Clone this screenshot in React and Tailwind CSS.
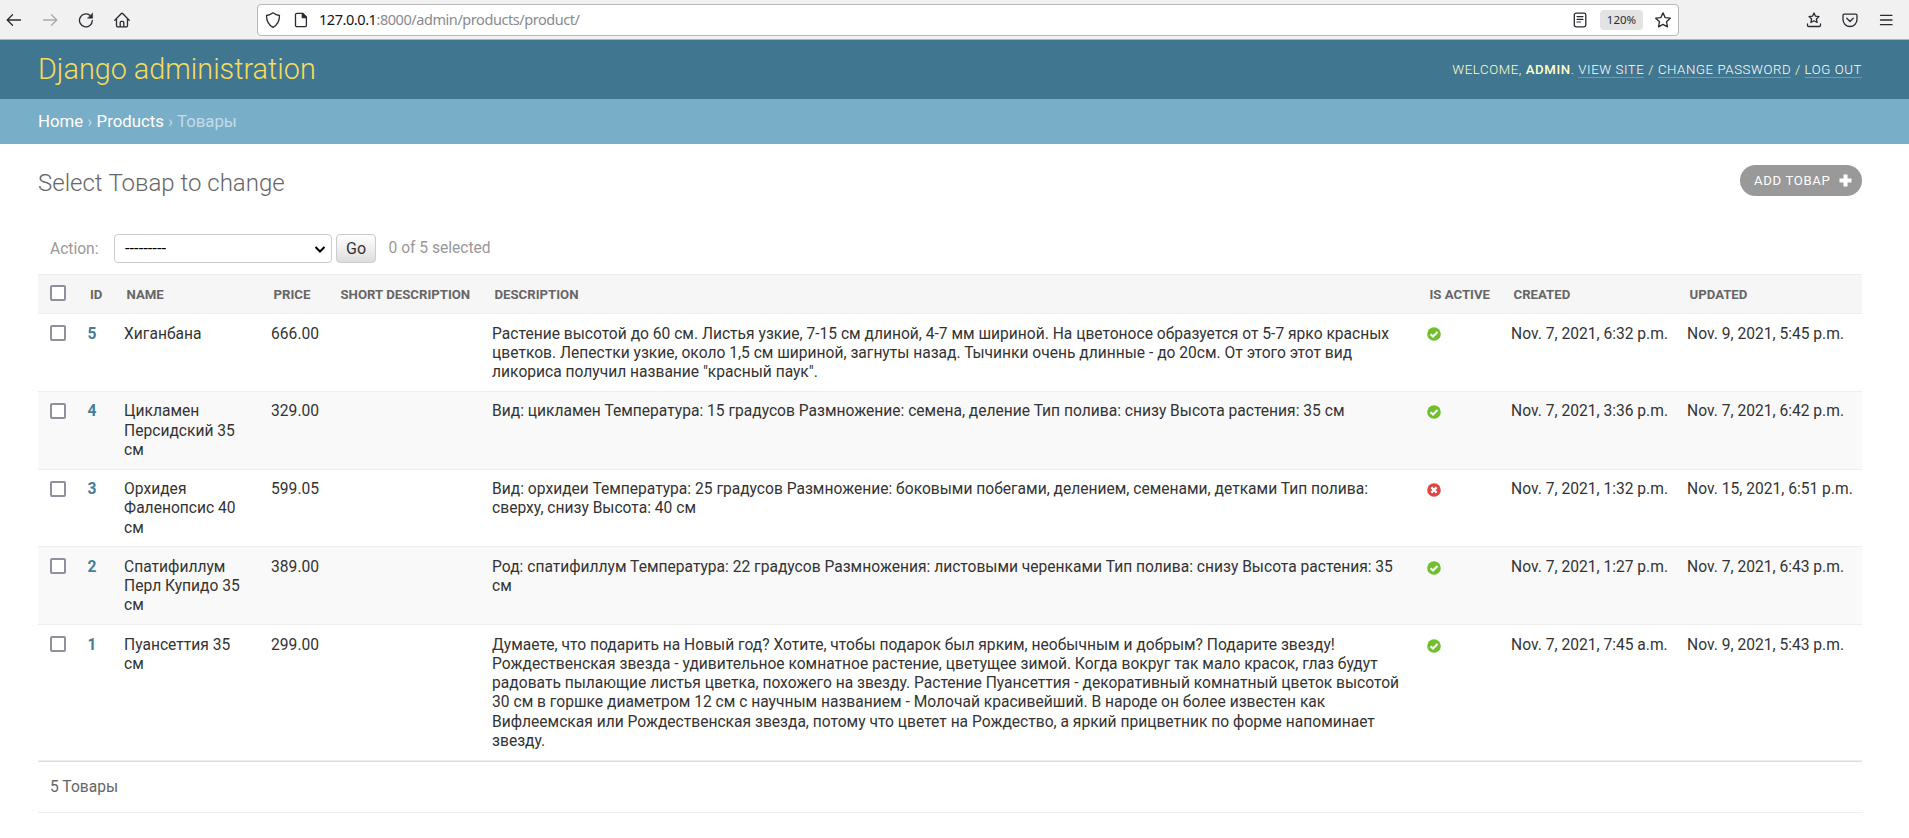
const ROWS = [
  { id: 5, name: 'Хиганбана', price: '666.00', desc: 'Растение высотой до 60 см. Листья узкие, 7-15 см длиной, 4-7 мм шириной. На цветоносе образуется от 5-7 ярко красных цветков. Лепестки узкие, около 1,5 см шириной, загнуты назад. Тычинки очень длинные - до 20см. От этого этот вид ликориса получил название "красный паук".', active: true, created: 'Nov. 7, 2021, 6:32 p.m.', updated: 'Nov. 9, 2021, 5:45 p.m.' },
  { id: 4, name: 'Цикламен Персидский 35 см', price: '329.00', desc: 'Вид: цикламен Температура: 15 градусов Размножение: семена, деление Тип полива: снизу Высота растения: 35 см', active: true, created: 'Nov. 7, 2021, 3:36 p.m.', updated: 'Nov. 7, 2021, 6:42 p.m.' },
  { id: 3, name: 'Орхидея Фаленопсис 40 см', price: '599.05', desc: 'Вид: орхидеи Температура: 25 градусов Размножение: боковыми побегами, делением, семенами, детками Тип полива: сверху, снизу Высота: 40 см', active: false, created: 'Nov. 7, 2021, 1:32 p.m.', updated: 'Nov. 15, 2021, 6:51 p.m.' },
  { id: 2, name: 'Спатифиллум Перл Купидо 35 см', price: '389.00', desc: 'Род: спатифиллум Температура: 22 градусов Размножения: листовыми черенками Тип полива: снизу Высота растения: 35 см', active: true, created: 'Nov. 7, 2021, 1:27 p.m.', updated: 'Nov. 7, 2021, 6:43 p.m.' },
  { id: 1, name: 'Пуансеттия 35 см', price: '299.00', desc: 'Думаете, что подарить на Новый год? Хотите, чтобы подарок был ярким, необычным и добрым? Подарите звезду! Рождественская звезда - удивительное комнатное растение, цветущее зимой. Когда вокруг так мало красок, глаз будут радовать пылающие листья цветка, похожего на звезду. Растение Пуансеттия - декоративный комнатный цветок высотой 30 см в горшке диаметром 12 см с научным названием - Молочай красивейший. В народе он более известен как Вифлеемская или Рождественская звезда, потому что цветет на Рождество, а яркий прицветник по форме напоминает звезду.', active: true, created: 'Nov. 7, 2021, 7:45 a.m.', updated: 'Nov. 9, 2021, 5:43 p.m.' },
];

const HEADS = ['ID', 'Name', 'Price', 'Short description', 'Description', 'Is active', 'Created', 'Updated'];

function Icon({ children, className = '', sw = 1.3 }) {
  return (
    <svg viewBox="0 0 16 16" className={`size-4 shrink-0 ${className}`} fill="none" stroke="currentColor" strokeWidth={sw} strokeLinecap="round" strokeLinejoin="round">
      {children}
    </svg>
  );
}

const STAR = 'M8 0.900l2.200 4.700 5.100.600-3.800 3.500 1 5.200L8 12.400l-4.500 2.500 1-5.200L.700 6.200l5.100-.600z';

function Toolbar() {
  return (
    <div className="flex h-10 items-center border-b border-[#b4b4b4] bg-[#f1f1f1] text-[#2b2a33]">
      <div className="flex w-[257px] items-center gap-5 pl-1.5">
        <Icon><path d="M14.500 8H1.500M6.500 2.700L1.200 8l5.300 5.300" /></Icon>
        <Icon className="text-[#a9a9ad]"><path d="M1.500 8h13M9.500 2.700L14.800 8l-5.300 5.300" /></Icon>
        <Icon><path d="M14.300 8.500A6.400 6.400 0 1 1 11.800 3.300" /><path d="M14.600 1.300V6.200H9.700z" fill="currentColor" strokeWidth="0.500" /></Icon>
        <Icon><path d="M.800 8.300L7.400 1.500a.9.9 0 0 1 1.200 0L15.200 8.300M2.500 7V13.500a1.400 1.400 0 0 0 1.400 1.400h8.200a1.400 1.400 0 0 0 1.400-1.400V7M6.200 14.500V10.500a1.200 1.200 0 0 1 1.200-1.200h1.200a1.200 1.200 0 0 1 1.200 1.200V14.500" /></Icon>
      </div>
      <div className="flex h-8 w-[1422px] items-center rounded border border-[#b9b9b9] bg-white pr-[7px] pl-[7px]">
        <Icon><path d="M8 .800C10 2.300 12 3.200 14.500 3.500 14.500 9 12.500 13 8 15.300 3.500 13 1.500 9 1.500 3.500 4 3.200 6 2.300 8 .800z" /></Icon>
        <Icon className="ml-3"><path d="M3.800 1.400h6L13.400 5V13.400a1.300 1.300 0 0 1-1.300 1.300H3.800A1.300 1.300 0 0 1 2.500 13.400V2.700A1.300 1.300 0 0 1 3.800 1.400z" /><path d="M9.300 1.400V5.500H13.400z" fill="currentColor" /></Icon>
        <span className="ml-2.5 font-['Noto_Sans'] text-[14.500px] tracking-[-0.440px] text-[#8a8a8e]"><span className="text-[#15141a]">127.0.0.1</span>:8000/admin/products/product/</span>
        <Icon className="ml-auto"><rect x="2.300" y="1.200" width="11.500" height="13.600" rx="1.800" /><path d="M5 4.600h6M5 7.300h6M5 10h3.500" strokeWidth="1.200" /></Icon>
        <span className="ml-3 flex h-5 w-[43px] items-center justify-center rounded bg-[#e3e3e3] font-['Noto_Sans'] text-[11.500px]">120%</span>
        <Icon className="ml-3"><path d={STAR} /></Icon>
      </div>
      <div className="ml-auto flex gap-5 pr-[15px]">
        <Icon><path d="M8 1l1.500 3.200 3.500.400-2.600 2.400.7 3.500L8 8.800l-3.100 1.700.7-3.500L3 4.600l3.500-.400zM1.500 12v1.300a1.200 1.200 0 0 0 1.200 1.200h10.600a1.200 1.200 0 0 0 1.200-1.200V12" /></Icon>
        <Icon><path d="M2.300 2.200h11.400a1.300 1.300 0 0 1 1.300 1.300v4a7 7 0 0 1-14 0v-4a1.300 1.300 0 0 1 1.300-1.300zM4.800 6.300L8 9.500l3.200-3.200" /></Icon>
        <Icon><path d="M2.500 3.300h11.500M2.500 8h11.500M2.500 12.700h11.500" /></Icon>
      </div>
    </div>
  );
}

function Status({ ok }) {
  return (
    <svg viewBox="0 0 14 14" className="mt-[2.900px] size-3.5">
      <circle cx="7" cy="7" r="6.800" fill={ok ? '#70bf2b' : '#dd4646'} />
      <path d={ok ? 'M3.500 7.200L6 9.500l4.500-4.500' : 'M4.400 4.400l5.200 5.200M9.600 4.400L4.400 9.600'} stroke="#fff" strokeWidth="2.200" fill="none" />
    </svg>
  );
}

function Check({ className = '' }) {
  return <div className={`size-4 rounded-xs border-2 border-[#8f8f9d] bg-white ${className}`} />;
}

export default function App() {
  const cell = 'px-[9.600px] pt-[10.600px] pb-[8.600px] align-top text-left';
  return (
    <div className="h-[838px] overflow-hidden bg-white font-[Roboto,sans-serif] text-[15.600px] leading-[19.200px] text-[#333]">
      <Toolbar />
      <header className="flex h-[59px] items-center justify-between bg-[#417690] pr-[47px] pl-[38px]">
        <h1 className="pb-0.5 text-[28.800px] leading-[36px] font-light text-[#f5dd5d]">Django administration</h1>
        <div className="text-[13.200px] tracking-[0.600px] text-[#ffc] uppercase font-light">
          Welcome, <strong className="font-medium">admin</strong>. <a className="border-b border-white/25 text-white">View site</a> / <a className="border-b border-white/25 text-white">Change password</a> / <a className="border-b border-white/25 text-white">Log out</a>
        </div>
      </header>
      <nav className="flex h-[45px] items-center bg-[#79aec8] pl-[38px] text-[16.800px] whitespace-pre text-[#c4dce8]">
        <a className="text-white">Home</a> › <a className="text-white">Products</a> › Товары
      </nav>
      <main className="pr-[47px] pl-[38px]">
        <div className="flex h-[90px] items-start justify-between pt-[21px]">
          <h2 className="pt-1 text-2xl leading-7 font-light text-[#666]">Select Товар to change</h2>
          <a className="flex h-[31px] w-[122px] items-center rounded-full bg-[#999] pl-[14px] text-[13.200px] tracking-[0.600px] text-white uppercase">
            Add товар
            <svg viewBox="0 0 13 13" className="ml-[9px] size-[13px]"><path d="M6.500 .500v12M.500 6.500h12" stroke="#fff" strokeWidth="4" strokeLinecap="butt" /></svg>
          </a>
        </div>
        <div className="flex h-10 items-start pl-3 text-[#999]">
          <span className="w-16 pt-1.5">Action:</span>
          <div className="flex h-[29px] w-[218px] items-center justify-between rounded border border-[#ccc] pr-[5px] pl-[10px] text-[16.500px] text-black">
            <span className="pt-px">---------</span>
            <svg viewBox="0 0 12 12" className="size-3" fill="none" stroke="#000" strokeWidth="2"><path d="M1.500 4L6 8.500 10.500 4" /></svg>
          </div>
          <div className="ml-1 flex h-[29px] w-10 items-center justify-center rounded border border-[#ccc] bg-linear-to-b from-white to-[#ddd] text-base text-[#333]">Go</div>
          <span className="ml-[12.500px] pt-[5px]">0 of 5 selected</span>
        </div>
        <table className="w-full table-fixed border-collapse">
          <colgroup>
            <col className="w-10" /><col className="w-[36.500px]" /><col className="w-[147px]" /><col className="w-[67px]" /><col className="w-[154px]" /><col className="w-[935px]" /><col className="w-[84px]" /><col className="w-[176px]" /><col />
          </colgroup>
          <thead>
            <tr className="h-[39px] border-y border-[#eee] bg-[#f6f6f6] text-[13.200px] text-[#666] uppercase">
              <th className="pt-px pl-3"><Check className="mb-[3px]" /></th>
              {HEADS.map((h) => <th key={h} className="pt-0.5 pl-3 text-left font-bold whitespace-nowrap">{h}</th>)}
            </tr>
          </thead>
          <tbody>
            {ROWS.map((r) => (
              <tr key={r.id} className="border-b border-[#eee] even:bg-[#f9f9f9]">
                <td className="pt-[11px] pl-3 align-top"><Check /></td>
                <td className={`${cell} font-bold text-[#447e9b]`}>{r.id}</td>
                <td className={cell}>{r.name}</td>
                <td className={cell}>{r.price}</td>
                <td />
                <td className={cell}>{r.desc}</td>
                <td className={cell}><Status ok={r.active} /></td>
                <td className={`${cell} whitespace-nowrap`}>{r.created}</td>
                <td className={`${cell} whitespace-nowrap`}>{r.updated}</td>
              </tr>
            ))}
          </tbody>
        </table>
        <p className="flex h-[52px] items-center border-t border-b border-t-[#ddd] border-b-[#eee] pt-0.5 pl-3 text-[#666]">5 Товары</p>
      </main>
    </div>
  );
}
